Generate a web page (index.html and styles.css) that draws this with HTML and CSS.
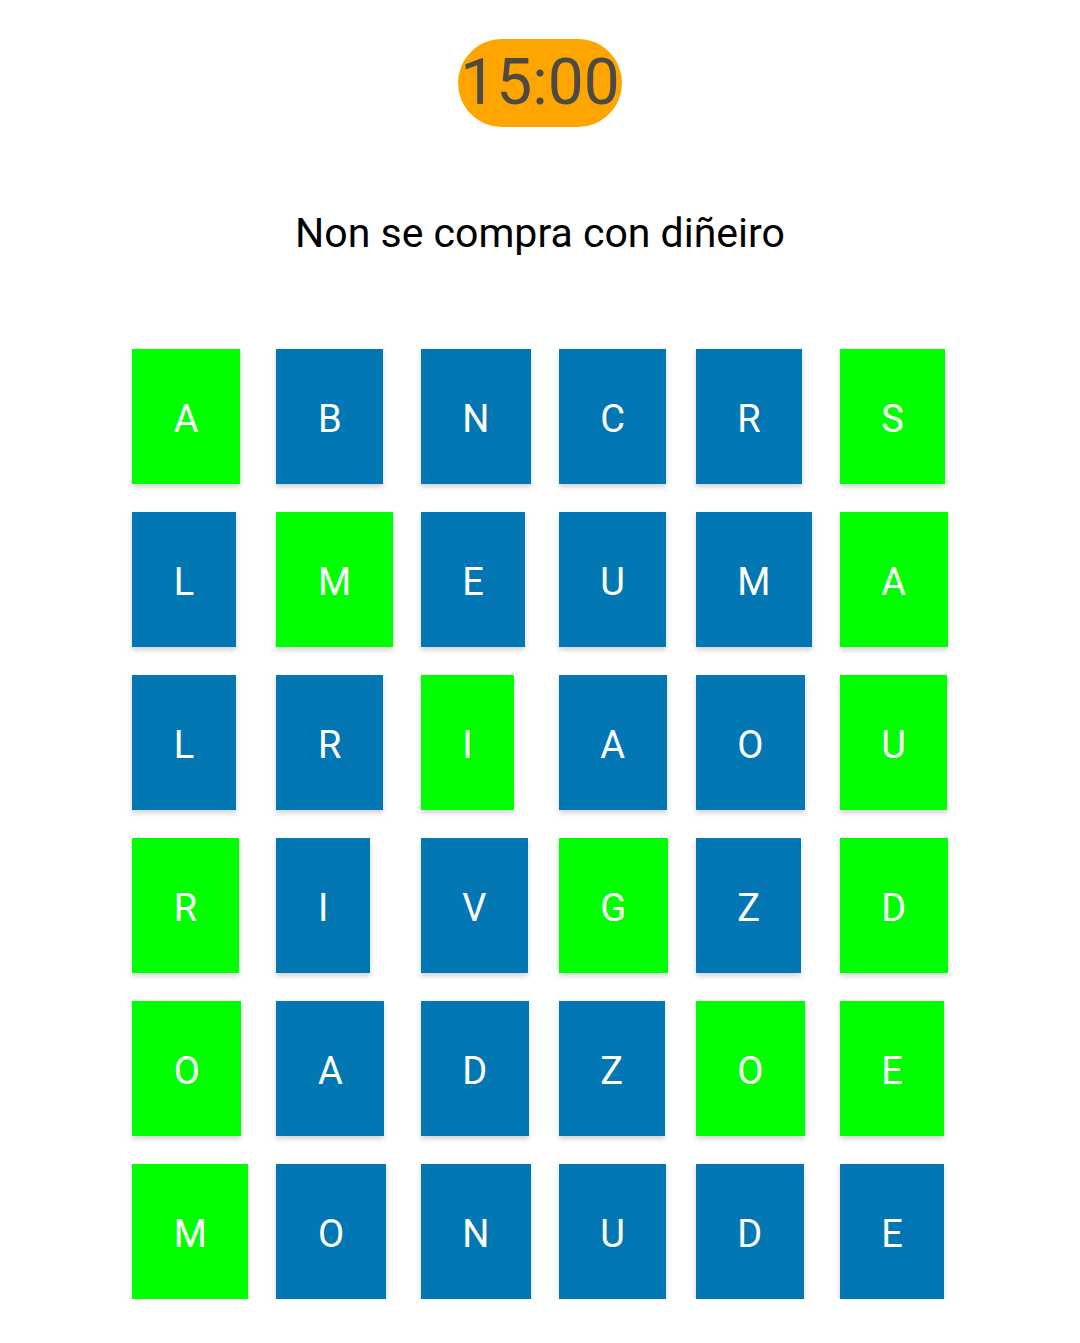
FILE: index.html
```html
<!DOCTYPE html>
<html lang="gl">

<head>
    <meta charset="utf-8">
    <meta name="viewport" content="width=device-width, initial-scale=1.0">
    <title>Sopa de letras</title>
    <link rel="stylesheet" href="styles.css">
</head>

<body>
    <div class="game">
        <div class="timer">15:00</div>

        <p class="clue">Non se compra con diñeiro</p>

        <div class="board">
            <span class="tile on">A</span>
            <span class="tile">B</span>
            <span class="tile">N</span>
            <span class="tile">C</span>
            <span class="tile">R</span>
            <span class="tile on">S</span>

            <span class="tile">L</span>
            <span class="tile on">M</span>
            <span class="tile">E</span>
            <span class="tile">U</span>
            <span class="tile">M</span>
            <span class="tile on">A</span>

            <span class="tile">L</span>
            <span class="tile">R</span>
            <span class="tile on">I</span>
            <span class="tile">A</span>
            <span class="tile">O</span>
            <span class="tile on">U</span>

            <span class="tile on">R</span>
            <span class="tile">I</span>
            <span class="tile">V</span>
            <span class="tile on">G</span>
            <span class="tile">Z</span>
            <span class="tile on">D</span>

            <span class="tile on">O</span>
            <span class="tile">A</span>
            <span class="tile">D</span>
            <span class="tile">Z</span>
            <span class="tile on">O</span>
            <span class="tile on">E</span>

            <span class="tile on">M</span>
            <span class="tile">O</span>
            <span class="tile">N</span>
            <span class="tile">U</span>
            <span class="tile">D</span>
            <span class="tile">E</span>
        </div>
    </div>
</body>

</html>
```

FILE: styles.css
```css
* {
    padding: 0;
    margin: 0;
}

html,
body {
    width: 100%;
    background-color: #fff;
    font-family: Roboto, "Noto Sans", sans-serif;
}

.game {
    display: flex;
    flex-direction: column;
    align-items: center;
    padding-top: 39px;
}

.timer {
    height: 88px;
    line-height: 88px;
    padding: 0 2px;
    border-radius: 44px;
    background-color: #ffa500;
    color: #4d4a45;
    font-size: 64px;
}

.clue {
    margin-top: 82px;
    height: 48px;
    line-height: 48px;
    font-size: 41px;
    color: #000;
}

.board {
    margin-top: 92px;
    display: grid;
    grid-template-columns: repeat(6, auto);
    gap: 28px;
    justify-items: start;
}

.tile {
    display: block;
    box-sizing: border-box;
    height: 135px;
    line-height: 130px;
    padding: 5px 41.5px 0;
    background-color: #0277b4;
    color: #fff;
    font-size: 38px;
    text-align: center;
    box-shadow: 0 3px 5px rgba(0, 0, 0, 0.18);
}

.tile.on {
    background-color: #00ff00;
}
```
